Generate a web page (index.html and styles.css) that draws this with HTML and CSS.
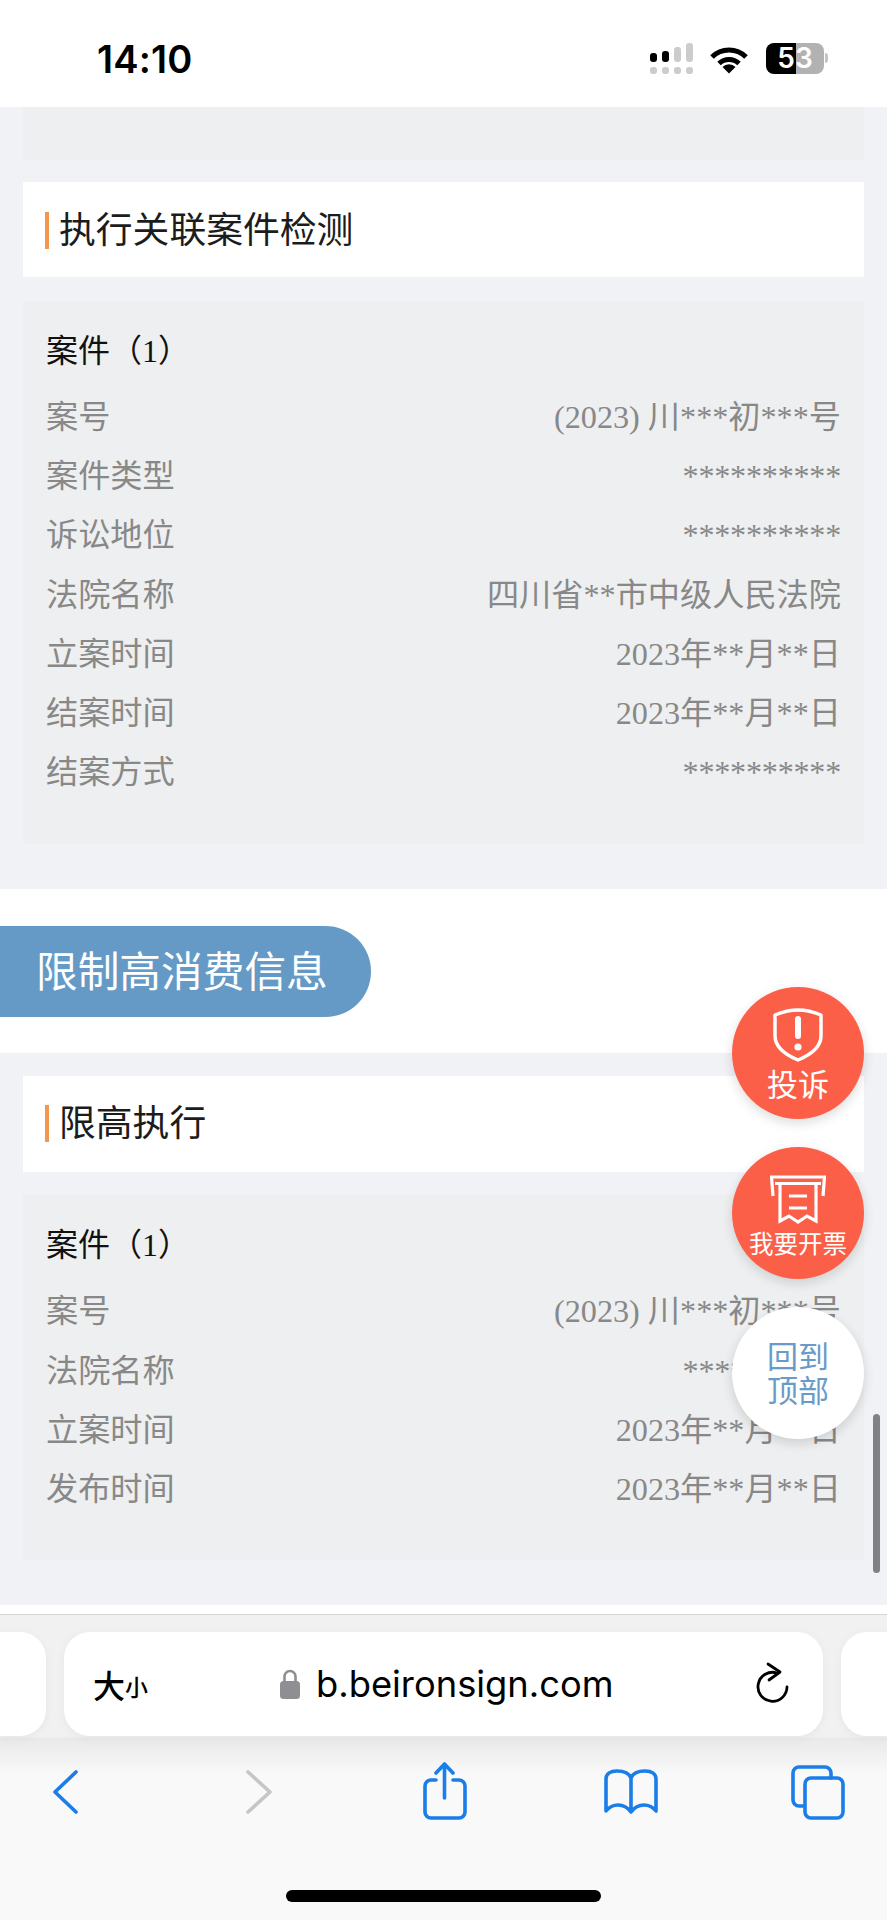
FILE: index.html
```html
<!DOCTYPE html>
<html lang="zh-CN">
<head>
  <meta charset="UTF-8" />
  <meta name="viewport" content="width=device-width, initial-scale=1.0"/>
  <title>b.beironsign.com</title>
  <link rel="stylesheet" href="styles.css">
</head>
<body>
  <div class="phone">
    <div class="status-bar">
      <span class="time">14:10</span>
      <div class="status-icons">
        <div class="signal">
          <div class="signal-top">
            <i class="s1"></i><i class="s2"></i><i class="s3"></i><i class="s4"></i>
          </div>
          <div class="signal-bottom"><i></i><i></i><i></i><i></i></div>
        </div>
        <svg class="wifi" width="40" height="28" viewBox="0 0 40 28">
          <path d="M3 11 A24 24 0 0 1 37 11" fill="none" stroke="#000" stroke-width="5"/>
          <path d="M10 17.5 A14.5 14.5 0 0 1 30 17.5" fill="none" stroke="#000" stroke-width="5"/>
          <path d="M20 27.5 L13.5 21 A9 9 0 0 1 26.5 21 Z" fill="#000"/>
        </svg>
        <div class="battery"><span>53</span></div>
        <div class="battery-cap"></div>
      </div>
    </div>

    <div class="box remnant"></div>

    <div class="sub-title first"><span>执行关联案件检测</span></div>
    <div class="box">
      <div class="case-title">案件（<em>1</em>）</div>
      <div class="row"><span>案号</span><span>(2023) 川***初***号</span></div>
      <div class="row"><span>案件类型</span><span class="mask">**********</span></div>
      <div class="row"><span>诉讼地位</span><span class="mask">**********</span></div>
      <div class="row"><span>法院名称</span><span>四川省**市中级人民法院</span></div>
      <div class="row"><span>立案时间</span><span>2023年**月**日</span></div>
      <div class="row"><span>结案时间</span><span>2023年**月**日</span></div>
      <div class="row"><span>结案方式</span><span class="mask">**********</span></div>
    </div>

    <div class="band">
      <div class="pill">限制高消费信息</div>
    </div>

    <div class="sub-title"><span>限高执行</span></div>
    <div class="box second">
      <div class="case-title">案件（<em>1</em>）</div>
      <div class="row"><span>案号</span><span>(2023) 川***初***号</span></div>
      <div class="row"><span>法院名称</span><span class="mask">**********</span></div>
      <div class="row"><span>立案时间</span><span>2023年**月**日</span></div>
      <div class="row"><span>发布时间</span><span>2023年**月**日</span></div>
    </div>

    <div class="white-strip"></div>

    <div class="toolbar">
      <div class="url-row">
        <div class="tab-side left"></div>
        <div class="url-bar">
          <div class="text-size"><b>大</b><b class="small">小</b></div>
          <div class="address">
            <svg width="22" height="30" viewBox="0 0 22 30">
              <path d="M5.5 14 V7.5 a5.5 5.5 0 0 1 11 0 V14" fill="none" stroke="#8e8e93" stroke-width="2.6"/>
              <rect x="1" y="12" width="20" height="18" rx="3.5" fill="#8e8e93"/>
            </svg>
            <span>b.beironsign.com</span>
          </div>
          <svg class="reload" width="40" height="44" viewBox="0 0 40 44">
            <path d="M24 11 A14.5 14.5 0 1 0 34 25" fill="none" stroke="#000" stroke-width="2.8" stroke-linecap="round"/>
            <path d="M15 2 L27 10 L16 18" fill="none" stroke="#000" stroke-width="2.8" stroke-linecap="round" stroke-linejoin="round"/>
          </svg>
        </div>
        <div class="tab-side right"></div>
      </div>

      <div class="nav-row">
        <svg width="60" height="60" viewBox="0 0 60 60">
          <path d="M41 10 L20 30 L41 50" class="nav-line"/>
        </svg>
        <svg width="60" height="60" viewBox="0 0 60 60">
          <path d="M25 10 L47 30 L25 50" class="nav-line off"/>
        </svg>
        <svg width="60" height="60" viewBox="0 0 60 60">
          <path d="M24 18 H19 a6 6 0 0 0 -6 6 V50 a6 6 0 0 0 6 6 H47 a6 6 0 0 0 6 -6 V24 a6 6 0 0 0 -6 -6 H41" class="nav-line"/>
          <path d="M32.5 36 V2 M24 11 L32.5 2 L41 11" class="nav-line"/>
        </svg>
        <svg width="60" height="60" viewBox="0 0 60 60">
          <path d="M31 16 C29 11 24 9 17 9 C10 9 6 12 6 17 V49 C10 44 14 43 18 43 C24 43 28 46 31 50 C34 46 38 43 44 43 C48 43 52 44 56 49 V17 C56 12 52 9 45 9 C38 9 33 11 31 16 Z M31 16 V50" class="nav-line"/>
        </svg>
        <svg width="60" height="60" viewBox="0 0 60 60">
          <rect x="17" y="16" width="38" height="40" rx="6" class="nav-line"/>
          <path d="M15 44 H11 a6 6 0 0 1 -6 -6 V11 a6 6 0 0 1 6 -6 H37 a6 6 0 0 1 6 6 V16" class="nav-line"/>
        </svg>
      </div>

      <div class="home-bar"></div>
    </div>

    <!-- floating buttons over the page -->
    <div class="fabs">
      <div class="fab red">
        <svg width="50" height="54" viewBox="0 0 50 54">
          <path d="M25 2 C33 2 41 4 48 7 V28 C48 40 37 47 25 52 C13 47 2 40 2 28 V7 C9 4 17 2 25 2 Z" fill="none" stroke="#fff" stroke-width="3.5" stroke-linejoin="round"/>
          <path d="M25 11 V28" stroke="#fff" stroke-width="6" stroke-linecap="round"/>
          <circle cx="25" cy="39" r="3.6" fill="#fff"/>
        </svg>
        <span class="fab-text">投诉</span>
      </div>
      <div class="fab red invoice">
        <svg width="56" height="50" viewBox="0 0 56 50">
          <path d="M3 21 L1.5 2 H54.5 L53 21 M5 8.5 H51" fill="none" stroke="#fff" stroke-width="3.2"/>
          <path d="M10 8.5 V46 L19 41 L28 47 L37 41 L46 46 V8.5" fill="none" stroke="#fff" stroke-width="3.2"/>
          <path d="M19 21 H37 M19 33 H37" stroke="#fff" stroke-width="3"/>
        </svg>
        <span class="fab-text small">我要开票</span>
      </div>
      <div class="fab top">回到<br>顶部</div>
    </div>

    <div class="scroll-thumb"></div>
  </div>
</body>
</html>
```

FILE: styles.css
```css
body {
  margin: 0;
  padding: 0;
  background-color: #f1f2f6;
  font-family: "Liberation Serif", "Noto Sans CJK SC", serif;
}
.phone {
  position: relative;
  width: 887px;
  height: 1920px;
  overflow: hidden;
  background-color: #f1f2f6;
}

/* status bar */
.status-bar {
  height: 107px;
  background: white;
  display: flex;
  justify-content: space-between;
  box-sizing: border-box;
  padding: 38px 59px 0 97px;
}
.time {
  font-family: Inter, "Liberation Sans", sans-serif;
  font-size: 38px;
  font-weight: 600;
  line-height: 42px;
  letter-spacing: 0.2px;
  color: #000;
}
.status-icons {
  display: flex;
  align-items: flex-start;
  padding-top: 5px;
}
.signal {
  width: 44px;
  margin-right: 15px;
}
.signal-top, .signal-bottom {
  display: flex;
  gap: 5px;
}
.signal-top {
  height: 19px;
  align-items: flex-end;
}
.signal i, .signal-bottom i {
  display: block;
  width: 7px;
  border-radius: 3px;
  background: #ccc;
}
.signal-top .s1 { height: 9px; background: #000; }
.signal-top .s2 { height: 11px; background: #000; }
.signal-top .s3 { height: 15px; }
.signal-top .s4 { height: 19px; }
.signal-bottom {
  margin-top: 5px;
}
.signal-bottom i {
  height: 7px;
}
.wifi {
  margin-top: 3px;
  margin-right: 17px;
}
.battery {
  width: 58px;
  height: 31px;
  border-radius: 8px;
  background: linear-gradient(to right, #000 30px, #b2b2b2 30px);
  color: white;
  font-family: Inter, "Liberation Sans", sans-serif;
  font-size: 28px;
  font-weight: 600;
  line-height: 31px;
  text-align: center;
}
.battery-cap {
  width: 3px;
  height: 10px;
  margin: 10px 0 0 1px;
  border-radius: 0 3px 3px 0;
  background: #c4c4c4;
}

/* page content */
.box {
  margin: 24px 23px 0;
  padding: 20px 23px 42px;
  background-color: #eeeff0;
}
.box.second {
  margin-top: 23px;
  padding-bottom: 41px;
}
.box.remnant {
  margin-top: 0;
  padding: 0;
  height: 53px;
}
.sub-title {
  margin: 23px 23px 0;
  height: 96px;
  box-sizing: border-box;
  padding: 29px 0 0 22px;
  background: white;
}
.sub-title.first {
  margin-top: 22px;
  height: 95px;
  padding-top: 30px;
}
.sub-title span {
  display: block;
  height: 37px;
  border-left: 4.5px solid #f3964e;
  padding-left: 10px;
  font-family: "Noto Sans CJK SC", sans-serif;
  font-size: 36.8px;
  line-height: 31px;
  color: #1c1c1c;
}
.case-title {
  height: 59px;
  margin-bottom: 8px;
  font-size: 32px;
  line-height: 61px;
  color: #111;
}
.case-title em {
  font-style: normal;
}
.row {
  display: flex;
  justify-content: space-between;
  height: 59.2px;
  font-size: 32.2px;
  line-height: 59px;
  color: #888;
  white-space: nowrap;
}
.mask {
  letter-spacing: -0.25px;
}
.band {
  margin-top: 45px;
  height: 164px;
  box-sizing: border-box;
  padding-top: 37px;
  background: white;
}
.pill {
  width: 371px;
  height: 91px;
  box-sizing: border-box;
  padding-left: 36px;
  border-radius: 0 46px 46px 0;
  background-color: #659ac6;
  font-family: "Noto Sans CJK SC", sans-serif;
  font-size: 41.7px;
  line-height: 86px;
  color: white;
}
.white-strip {
  margin-top: 45px;
  height: 9px;
  background: white;
}

/* safari toolbar */
.toolbar {
  height: 306px;
  box-sizing: border-box;
  border-top: 1px solid #d6d6d6;
  padding-top: 17px;
  background: linear-gradient(to bottom, #f1f1f1 0, #f1f1f1 122px, #e9e9e9 123px, #f9f9f9 160px);
}
.url-row {
  display: flex;
  justify-content: space-between;
  height: 104px;
}
.tab-side, .url-bar {
  background: white;
  box-shadow: 0 2px 10px rgba(0,0,0,0.05);
}
.tab-side {
  width: 46px;
}
.tab-side.left {
  border-radius: 0 26px 26px 0;
}
.tab-side.right {
  border-radius: 26px 0 0 26px;
}
.url-bar {
  width: 759px;
  box-sizing: border-box;
  padding: 0 30px 0 29px;
  display: flex;
  align-items: center;
  border-radius: 26px;
}
.text-size {
  width: 186px;
  display: flex;
  align-items: flex-end;
  font-family: "Noto Sans CJK SC", sans-serif;
  font-size: 32px;
  line-height: 40px;
  color: #000;
}
.text-size b {
  font-weight: 500;
}
.text-size .small {
  font-size: 23px;
  line-height: 36px;
}
.address {
  display: flex;
  align-items: center;
  gap: 15px;
  font-family: Inter, "Liberation Sans", sans-serif;
  font-size: 36.3px;
  color: #000;
}
.reload {
  margin-left: auto;
}
.nav-row {
  display: flex;
  justify-content: space-between;
  margin-top: 26px;
  padding: 0 39px 0 35px;
}
.nav-line {
  fill: none;
  stroke: #1a7de8;
  stroke-width: 3.6;
  stroke-linecap: round;
  stroke-linejoin: round;
}
.nav-line.off {
  stroke: #c6c6c6;
}
.home-bar {
  width: 315px;
  height: 12px;
  margin: 68px 0 0 286px;
  border-radius: 6px;
  background: #000;
}

/* floating buttons */
.fabs {
  position: absolute;
  top: 987px;
  right: 23px;
  display: flex;
  flex-direction: column;
  gap: 28px;
}
.fab {
  width: 132px;
  height: 132px;
  box-sizing: border-box;
  border-radius: 50%;
  display: flex;
  flex-direction: column;
  align-items: center;
  box-shadow: 0 4px 12px rgba(0,0,0,0.14);
  font-family: "Noto Sans CJK SC", sans-serif;
}
.fab.red {
  background-color: #fb5f48;
  color: white;
  padding-top: 21px;
}
.fab.red.invoice {
  padding-top: 28px;
}
.fab-text {
  font-size: 31px;
  line-height: 36px;
  margin-top: 3px;
}
.fab-text.small {
  font-size: 24.5px;
  line-height: 30px;
  margin-top: 3px;
}
.fab.top {
  background: white;
  color: #6a9bc6;
  font-size: 31px;
  line-height: 34px;
  padding-top: 31px;
  text-align: center;
}
.scroll-thumb {
  position: absolute;
  top: 1414px;
  left: 873px;
  width: 7px;
  height: 159px;
  border-radius: 4px;
  background: #808085;
}
```
